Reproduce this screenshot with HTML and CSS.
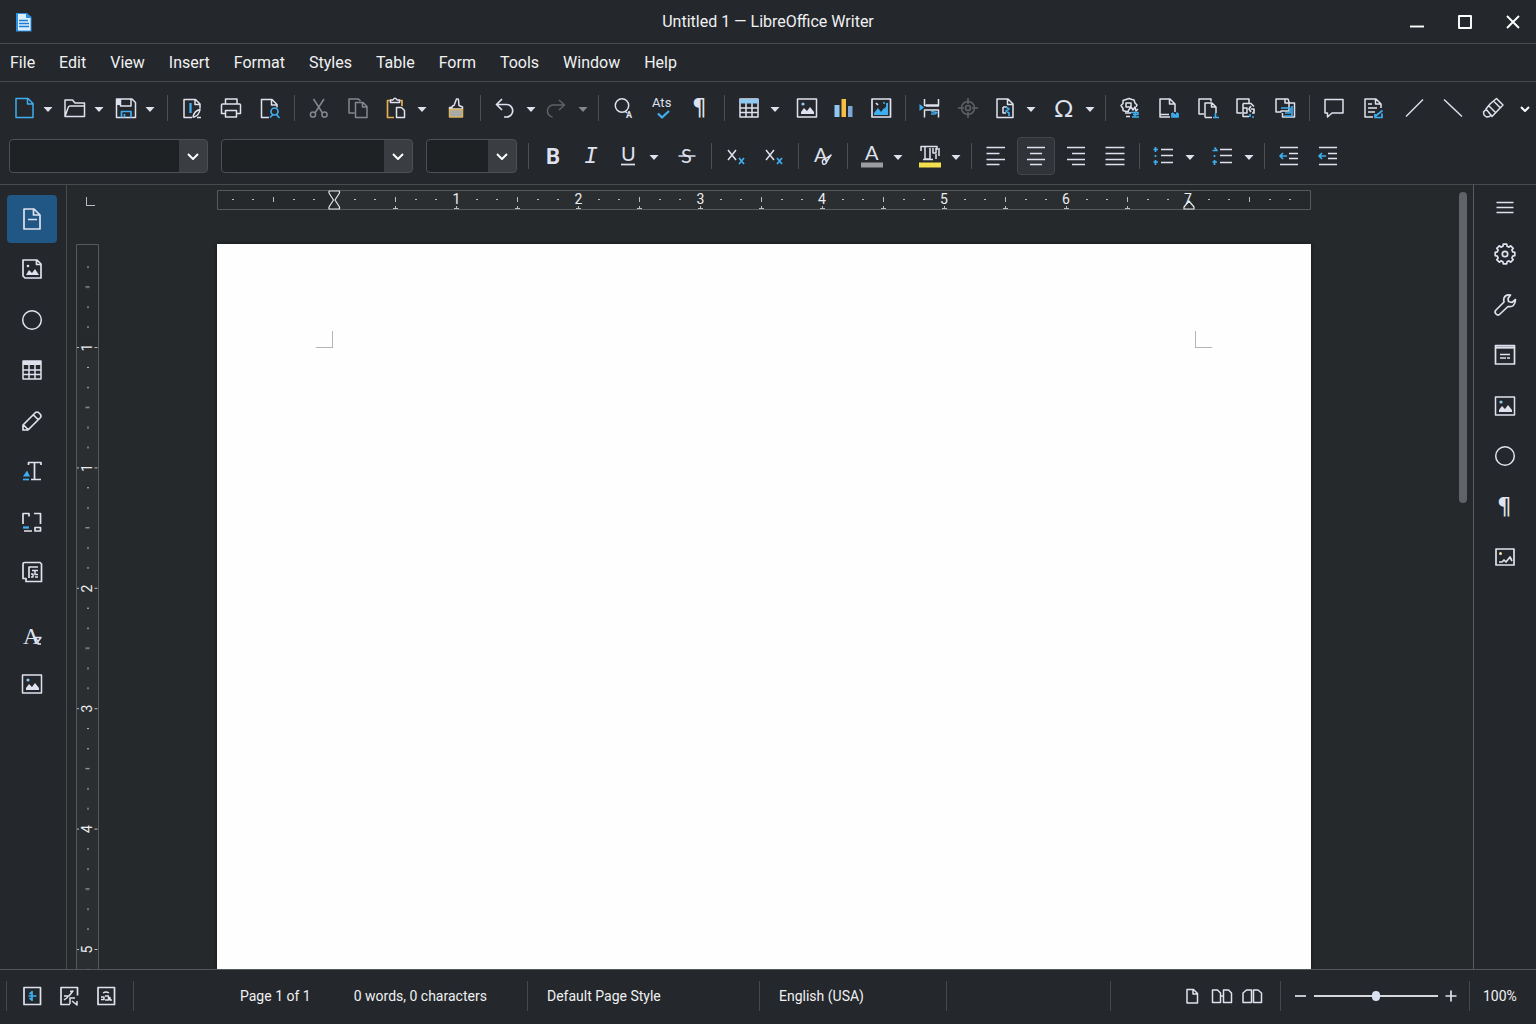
FILE: index.html
```html
<!DOCTYPE html>
<html lang="en">
<head>
<meta charset="utf-8">
<title>Untitled 1 — LibreOffice Writer</title>
<link rel="stylesheet" href="styles.css">
</head>
<body>
<svg class="defs" aria-hidden="true">
  <symbol id="drop" viewBox="0 0 14 24"><path class="fill" d="M2.500 11h9l-4.500 5z"/></symbol>
  <symbol id="chev" viewBox="0 0 28 24"><path class="win" d="M9 10l5 5 5-5"/></symbol>
  <symbol id="pic" viewBox="0 0 24 24"><path d="M2.500 3h19v18h-19z"/><path class="fill" d="M6 18v-2l3-4 3 3 3-4 4 5v2z"/><circle class="pale-blue" cx="8" cy="8" r="1.600"/></symbol>
  <symbol id="ring" viewBox="0 0 24 24"><circle cx="12" cy="12" r="9.300"/></symbol>
  <symbol id="grid" viewBox="0 0 24 24"><path d="M3 3h18v18H3zM9 7v14M15 7v14M3 12h18M3 16.500h18"/></symbol>
</svg>

<header class="titlebar">
  <svg class="icon app-icon" viewBox="0 0 24 24"><path fill="#2d8fe0" stroke="none" d="M5 3h11l4.500 4v14.500H5z"/><path fill="#d9efff" stroke="none" d="M7 4h8v4h4.500v12.500H7z"/><path stroke="#1d7bd0" d="M8 10.500h9M8 13.500h10M8 16.500h10"/></svg>
  <h1>Untitled 1 — LibreOffice Writer</h1>
  <div class="window-buttons">
    <button aria-label="Minimize"><svg class="icon" viewBox="0 0 24 24"><path class="win" d="M5 16.500h14"/></svg></button>
    <button aria-label="Maximize"><svg class="icon" viewBox="0 0 24 24"><path class="win" d="M6 6h12v12H6z"/></svg></button>
    <button aria-label="Close"><svg class="icon" viewBox="0 0 24 24"><path class="win" d="M6 6l12 12M18 6L6 18"/></svg></button>
  </div>
</header>

<nav class="menubar" aria-label="Menu">
  <button>File</button><button>Edit</button><button>View</button><button>Insert</button><button>Format</button><button>Styles</button><button>Table</button><button>Form</button><button>Tools</button><button>Window</button><button>Help</button>
</nav>

<section class="toolbars" aria-label="Toolbars">
  <div class="row standard">
    <div class="group file">
      <span class="split"><button aria-label="New"><svg class="icon blue" viewBox="0 0 24 24"><path d="M4 2.500h12l5 5v14H4zM15.500 3v5H21"/></svg></button><button class="drop" aria-label="New options"><svg><use href="#drop"/></svg></button></span>
      <span class="split"><button aria-label="Open"><svg class="icon" viewBox="0 0 24 24"><path d="M2 20.500V4h7.500l2.500 3h9.500v13.500zM2 20.500l3-8.500q.4-2 2-2h14"/></svg></button><button class="drop" aria-label="Open options"><svg><use href="#drop"/></svg></button></span>
      <span class="split"><button aria-label="Save"><svg class="icon" viewBox="0 0 24 24"><path d="M2.500 3h15.500l3.500 3.500V21.500h-19zM6.500 3v7H17V3"/><path class="fill" d="M3 3h4v6H3z"/><path class="blue bold" d="M7.500 21.500v-6H17v6M10.500 18v3.500"/></svg></button><button class="drop" aria-label="Save options"><svg><use href="#drop"/></svg></button></span>
    </div>
    <div class="group">
      <button aria-label="Export PDF"><svg class="icon" viewBox="0 0 24 24"><path d="M12 21.500H4v-18h11.500l4.500 4.500v4.500M15 4v4.500h5M13 21q1-6 7-7.500-1 6-6 7.500zM17 21.500h4"/><path class="blue thick" d="M10.500 7v10"/></svg></button>
      <button aria-label="Print"><svg class="icon" viewBox="0 0 24 24"><path d="M6.500 8V3h11.500v5M6 17.500H2.500V9q0-1 1-1h17q1 0 1 1v8.500H18M6.500 14.500h11v6.500h-11z"/></svg></button>
      <button aria-label="Print Preview"><svg class="icon" viewBox="0 0 24 24"><path d="M11 21.500H3.500v-18H14l5 5v3M13.500 4v5H19"/><path class="blue bold" d="M12 21.500l3.500-3.500M18 18l3.500 4"/><circle class="blue bold" cx="16.500" cy="15.500" r="3.500"/></svg></button>
    </div>
    <div class="group">
      <button aria-label="Cut"><svg class="icon dim" viewBox="0 0 24 24"><path d="M6.500 3l9 14M17 3L8 17"/><circle cx="6" cy="18.500" r="2.600"/><circle cx="17.500" cy="18.500" r="2.600"/></svg></button>
      <button aria-label="Copy"><svg class="icon dim" viewBox="0 0 24 24"><path d="M8.500 17H3V3h9.500l2 2M9.500 6.500h7.500l4 4v11H9.500zM16.500 7v4H21"/></svg></button>
      <span class="split"><button aria-label="Paste"><svg class="icon" viewBox="0 0 24 24"><path class="gold bold" d="M7 4.500H3.500v17H10M18 10V4.500h-3"/><path d="M6.500 6V4H9q2-3.500 4 0h2.500v2.500h-9zM12.500 11.500h5l3 3v7h-8z"/></svg></button><button class="drop" aria-label="Paste options"><svg><use href="#drop"/></svg></button></span>
      <button aria-label="Clone Formatting"><svg class="icon" viewBox="0 0 24 24"><path d="M8 11.500q0-2 2-2L12.500 3q2-.5 2 1l.5 5.500 3.500 1.500v2h-13v-1.500z"/><path fill="#aaa9aa" stroke="#d8b45c" d="M5.500 13.500h13v7.500h-13z"/></svg></button>
    </div>
    <div class="group end-drop">
      <span class="split"><button aria-label="Undo"><svg class="icon" viewBox="0 0 24 24"><path class="bold" d="M9 3L3.500 8.500 9 14M4 8.500h9.500a6 6 0 010 12.500H11"/></svg></button><button class="drop" aria-label="Undo list"><svg><use href="#drop"/></svg></button></span>
      <span class="split"><button aria-label="Redo"><svg class="icon faint" viewBox="0 0 24 24"><path d="M14 4l5.500 5-5.500 5M19 9h-9.500a6 6 0 00-2 12"/></svg></button><button class="drop faint" aria-label="Redo list"><svg viewBox="0 0 14 24"><path fill="#85878c" stroke="none" d="M2.500 11h9l-4.500 5z"/></svg></button></span>
    </div>
    <div class="group">
      <button aria-label="Find and Replace"><svg class="icon" viewBox="0 0 24 24"><circle cx="11" cy="9.500" r="6.700"/><path d="M14.500 15.500l1.500 1.500"/><text class="solid" x="15" y="22" font-size="9">A</text></svg></button>
      <button aria-label="Spelling"><svg class="icon" viewBox="0 0 24 24"><text x="2" y="11" font-size="13">Ats</text><path class="blue thick" d="M8 17.500l4 4 7-6.500"/></svg></button>
      <button aria-label="Formatting Marks"><svg class="icon" viewBox="0 0 24 24"><text class="para" x="4" y="19">¶</text></svg></button>
    </div>
    <div class="group">
      <span class="split"><button aria-label="Insert Table"><svg class="icon" viewBox="0 0 24 24"><use href="#grid"/><path class="pale-blue" d="M2.500 3h19v4.500h-19z"/></svg></button><button class="drop" aria-label="Table options"><svg><use href="#drop"/></svg></button></span>
      <button aria-label="Insert Image"><svg class="icon"><use href="#pic"/></svg></button>
      <button aria-label="Insert Chart"><svg class="icon" viewBox="0 0 24 24"><path class="pale-blue" d="M2.500 9h5v12h-5z"/><path fill="#f5bf42" stroke="none" d="M9.500 3h4.500v18H9.500z"/><path fill="#7ba7d9" stroke="none" d="M16 10h4.500v11H16z"/></svg></button>
      <button aria-label="Insert Text Box"><svg class="icon" viewBox="0 0 24 24"><path class="bold" d="M3 3h18.500v18H3z"/><path class="blue-fill" d="M5 19v-2l4-5 3 4 3-4 2 1V7h2v12z"/><path class="bold" d="M7 7l2 2"/><path class="blue bold" d="M14 7h2M16 12h3"/></svg></button>
    </div>
    <div class="group end-drop">
      <button aria-label="Page Break"><svg class="icon" viewBox="0 0 24 24"><path d="M6.500 3v6.500h14V3M6.500 21.500V14h14v7.500"/><path class="thick" d="M8 9.500h13"/><path class="blue-fill" d="M1.500 8l4.500 3.500L1.500 15z"/><path class="blue" d="M13 15.500l6 1-2 1.500h-4"/></svg></button>
      <button aria-label="Field"><svg class="icon faint" viewBox="0 0 24 24"><circle cx="12" cy="12" r="6.500"/><circle class="bold" cx="12" cy="12" r="2.500"/><path d="M12 2v6M12 16v6M2 12h6M16 12h6"/></svg></button>
      <span class="split"><button aria-label="Insert Field"><svg class="icon" viewBox="0 0 24 24"><path d="M4 3h11l5 5v13.500H4zM14.500 3.500v5H20"/><path d="M10 11v6h3M10 11h4"/><path class="blue bold" d="M13 11l3 2-3 2 3 2v3"/></svg></button><button class="drop" aria-label="Field options"><svg><use href="#drop"/></svg></button></span>
      <span class="split"><button aria-label="Special Character"><svg class="icon" viewBox="0 0 24 24"><text class="light" x="2" y="21" font-size="24">Ω</text></svg></button><button class="drop" aria-label="Character options"><svg><use href="#drop"/></svg></button></span>
    </div>
    <div class="group">
      <button aria-label="Hyperlink"><svg class="icon" viewBox="0 0 24 24"><path d="M8 3.500l3-1 3 1 2 .5 1 3 2 2-1 2M8 3.500l-3 1v3l-2 2 2 3v2l3 1h3"/><path d="M8 7h5v4H8zM10 15l3-4 2 3 2-3 1 4 2-2"/><path d="M7 17h6M8 20.500h4"/><path class="blue" d="M13 16.500h7v2h-5M14 21h7M17 16v5"/></svg></button>
      <button aria-label="Footnote"><svg class="icon" viewBox="0 0 24 24"><path d="M13 21H3V3h10l5 5v8M12.500 3.500V8H18"/><path d="M3 18.500h9"/><path class="blue bold" d="M15 17l5 3.500v-4M16 20h4M15 17v4h6v-4"/></svg></button>
      <button aria-label="Endnote"><svg class="icon" viewBox="0 0 24 24"><path d="M8 18H3V3h12v2.500M9 21.500V7h7l4 4v6M9 21.500h7M15.500 7v4H20"/><path class="blue bold" d="M19.500 17v4M17 21.500h6"/></svg></button>
      <button aria-label="Bookmark"><svg class="icon" viewBox="0 0 24 24"><path d="M8 17H3V3h12v4M9 7.500h8l3 3M9 7.500v13h6M15 4v3M9 12h4v5H9"/><path class="bold" d="M17 10l-2 3 2 3M17 13h3v4h-2"/><path class="blue bold" d="M16 18v3M18 21h2"/></svg></button>
      <button aria-label="Cross-reference"><svg class="icon" viewBox="0 0 24 24"><path d="M8 16H3V3h12l1 3v9H8zM12 3v4h4"/><path d="M16 7h5.500v14h-12v-4"/><path class="blue bold" d="M8 12h9v5h-5M11 20h8V10"/></svg></button>
    </div>
    <div class="group last">
      <button aria-label="Comment"><svg class="icon" viewBox="0 0 24 24"><path d="M3 3.500h18V17H10l-4.500 4V17H3z"/></svg></button>
      <button aria-label="Track Changes"><svg class="icon" viewBox="0 0 24 24"><path d="M11 21H3V3h11l5 5v4M13.500 3.500V8H19M6 8h4M6 12h9M6 16h7"/><path class="blue bold" d="M13 20.500l7.500-6M13 18v3.500h7v-4"/></svg></button>
      <button aria-label="Line"><svg class="icon" viewBox="0 0 24 24"><path d="M4 20.500L21 3.500"/></svg></button>
      <button aria-label="Arrow Line"><svg class="icon" viewBox="0 0 24 24"><path d="M3 3.500l18 17"/></svg></button>
      <span class="split wide"><button aria-label="Draw Functions"><svg class="icon" viewBox="0 0 24 24"><path d="M9 8l6.500-5.500L22 9l-11 11.500L5 13zM12.500 5l7 7M8 10l6.500 6.500M5.500 13L2.500 16l.5 3 2.500 2 3-.5 2-2"/></svg></button><button class="drop" aria-label="More controls"><svg viewBox="7 0 14 24"><path class="win" d="M10 11l4 4 4-4"/></svg></button></span>
    </div>
  </div>

  <div class="row formatting">
    <div class="combos">
      <span class="combo style"><select aria-label="Paragraph Style"><option></option></select><svg><use href="#chev"/></svg></span>
      <span class="combo font"><select aria-label="Font Name"><option></option></select><svg><use href="#chev"/></svg></span>
      <span class="combo size"><select aria-label="Font Size"><option></option></select><svg><use href="#chev"/></svg></span>
    </div>
    <div class="group">
      <button aria-label="Bold"><svg class="icon" viewBox="0 0 24 24"><text class="strong" x="5" y="20" font-size="22">B</text></svg></button>
      <button aria-label="Italic"><svg class="icon" viewBox="0 0 24 24"><text class="slab" x="6" y="19" font-size="23">I</text></svg></button>
      <span class="split u"><button aria-label="Underline"><svg class="icon" viewBox="0 0 24 24"><text class="light" x="5" y="17" font-size="20">U</text><path class="bold" d="M5 20.500h14"/></svg></button><button class="drop" aria-label="Underline options"><svg><use href="#drop"/></svg></button></span>
      <button aria-label="Strikethrough"><svg class="icon" viewBox="0 0 24 24"><text class="light" x="6" y="19" font-size="20">S</text><path d="M3.500 12h17"/></svg></button>
    </div>
    <div class="group">
      <button aria-label="Superscript"><svg class="icon" viewBox="0 0 24 24"><path d="M4 6l8 10M12 6L4 16"/><path class="blue bold" d="M15 14l5 6M20 14l-5 6"/></svg></button>
      <button aria-label="Subscript"><svg class="icon" viewBox="0 0 24 24"><path d="M4 6l8 10M12 6L4 16"/><path class="blue bold" d="M15 14l5 6M20 14l-5 6"/></svg></button>
    </div>
    <div class="group">
      <button aria-label="Clear Formatting"><svg class="icon" viewBox="0 0 24 24"><text class="light" x="3" y="18" font-size="20">A</text><path d="M12 20q-2-4 2-5l6-4-4 6q-1 4-4 3z"/></svg></button>
    </div>
    <div class="group end-drop">
      <span class="split"><button aria-label="Font Color"><svg class="icon" viewBox="0 0 24 24"><text class="light" x="5" y="16" font-size="20">A</text><path fill="#9c9da0" stroke="none" d="M1 18.500h22v5H1z"/></svg></button><button class="drop" aria-label="Font color options"><svg><use href="#drop"/></svg></button></span>
      <span class="split"><button aria-label="Highlighting"><svg class="icon" viewBox="0 0 24 24"><path d="M3 7V2.500h16V6M7 3v12h5V4M5 15.500h10M15 4v5h3V4M18 10v5M21 4v8"/><path fill="#f4e04d" stroke="none" d="M1 18.500h22v5H1z"/></svg></button><button class="drop" aria-label="Highlighting options"><svg><use href="#drop"/></svg></button></span>
    </div>
    <div class="group">
      <button aria-label="Align Left"><svg class="icon" viewBox="0 0 24 24"><path d="M2.500 3.500h18.500M2.500 9.500h13M2.500 15.500h18.500M2.500 20.500h13"/></svg></button>
      <button class="pressed" aria-label="Center"><svg class="icon" viewBox="0 0 24 24"><path d="M3 3.500h18M6 9.500h12M3 15.500h18M6 20.500h12"/></svg></button>
      <button aria-label="Align Right"><svg class="icon" viewBox="0 0 24 24"><path d="M3 3.500h18M8 9.500h13M3 15.500h18M8 20.500h13"/></svg></button>
      <button aria-label="Justify"><svg class="icon" viewBox="0 0 24 24"><path d="M2.500 3.500h19M2.500 9.500h19M2.500 15.500h19M2.500 20.500h19"/></svg></button>
    </div>
    <div class="group end-drop">
      <span class="split"><button aria-label="Bullets"><svg class="icon" viewBox="0 0 24 24"><path d="M9 5.500h12M9 11.500h12M9 18.500h12"/><path class="blue bold" d="M3.500 3v5M1.500 5.500h4.500M3.500 11v2M3.500 16v5M1.500 18h4.500"/></svg></button><button class="drop" aria-label="Bullet options"><svg><use href="#drop"/></svg></button></span>
      <span class="split"><button aria-label="Numbering"><svg class="icon" viewBox="0 0 24 24"><path d="M9 5.500h12M9 11.500h12M9 18.500h12"/><path class="blue bold" d="M1.500 6.500h4.500L3.500 3.500M3.500 11v2M3.500 16v5M1.500 18h4.500"/></svg></button><button class="drop" aria-label="Numbering options"><svg><use href="#drop"/></svg></button></span>
    </div>
    <div class="group start">
      <button aria-label="Increase Indent"><svg class="icon" viewBox="0 0 24 24"><path d="M3 3.500h18M12 9.500h9M12 14.500h9M3 20.500h18"/><path class="blue bold" d="M3 12h7M6 9l-3 3 3 3"/></svg></button>
      <button aria-label="Decrease Indent"><svg class="icon" viewBox="0 0 24 24"><path d="M3 3.500h18M12 9.500h9M12 14.500h9M3 20.500h18"/><path class="blue bold" d="M3 12h7M6 9l-3 3 3 3"/></svg></button>
    </div>
  </div>
</section>

<main class="workspace">
  <nav class="side left" aria-label="Insert">
    <div class="side-group main-group">
      <button class="active" aria-label="Page"><svg class="icon" viewBox="0 0 24 24"><path class="bold" d="M4 2h10l6 6v14H4zM13.500 2.500V8H20"/><path d="M8 12.500h9"/></svg></button>
      <button aria-label="Image"><svg class="icon" viewBox="0 0 24 24"><path class="bold" d="M3 3h14l4 4v14H5l-2-2zM16.500 3.500v4H21"/><path class="fill" d="M6 18l3-5 3 3 3-4 4 6z"/><circle class="fill" cx="8" cy="9" r="1.300"/></svg></button>
      <button aria-label="Shape"><svg class="icon"><use href="#ring"/></svg></button>
      <button aria-label="Table"><svg class="icon" viewBox="0 0 24 24"><use href="#grid"/><path class="fill" d="M3 3h18v4H3z"/></svg></button>
      <button aria-label="Draw"><svg class="icon" viewBox="0 0 24 24"><path class="bold" d="M3 21v-5L15.500 3.500q1.500-1 3 0l2 2q1 1.500 0 3L8 21zM13.500 6l5 5M3.500 16l4.500 4.500"/></svg></button>
      <button aria-label="Text"><svg class="icon" viewBox="0 0 24 24"><path class="bold" d="M8.500 6V3.500H21V6M14.500 4v16M11 20.500h10"/><path class="blue-fill" d="M3 17.500l4-6 3 6z"/><path class="blue bold" d="M3 20.500h6"/></svg></button>
      <button aria-label="Frame"><svg class="icon" viewBox="0 0 24 24"><path class="bold" d="M3 14V3.500h6v3M14 3.500h6.500V14M4 21h8M15 17.500h5.500v3.500H15z"/><path class="blue thick" d="M3 17.500h6"/></svg></button>
      <button aria-label="Section"><svg class="icon" viewBox="0 0 24 24"><path class="bold" d="M6 18.500H3V4q0-1.500 1.500-1.500H20l1.500 1.500v17.500H6zM9 18V7h9"/><path d="M12 10.500h6M15 10.500v4h3M11 14h2v3h-2M15 17h3"/></svg></button>
    </div>
    <div class="side-group">
      <button aria-label="Character"><svg class="icon" viewBox="0 0 24 24"><text class="serif" x="3" y="20" font-size="23">A</text><path d="M15 13.500h6l-3 4-3-4M18 17v3h3"/></svg></button>
      <button aria-label="Gallery"><svg class="icon"><use href="#pic"/></svg></button>
    </div>
  </nav>

  <section class="editor">
    <div class="tab-corner"><span></span></div>
    <div class="hruler">
      <svg viewBox="0 0 1094 20" role="img" aria-label="Horizontal ruler">
        <defs>
          <pattern id="hd" patternUnits="userSpaceOnUse" x="117" y="0" width="122" height="20"><path class="dots" d="M20 9.500h2M40 9.500h2M81 9.500h2M101 9.500h2M61.500 7v5"/></pattern>
          <pattern id="hm" patternUnits="userSpaceOnUse" x="147" y="0" width="61" height="20"><path class="dots" d="M31.500 19v-3M29 18.500h5"/></pattern>
        </defs>
        <rect class="lit" x="117" y="0" width="855" height="20"/>
        <rect x="10" width="1074" height="20" fill="url(#hd)"/>
        <rect x="130" width="830" height="20" fill="url(#hm)"/>
        <rect class="box" x=".5" y=".5" width="1093" height="19"/>
        <path class="marker" d="M112 1h10.500v2l-4.500 7 4.500 7v2H112v-2l4.500-7-4.500-7zM972 11l-5 6v2h10v-2z"/>
        <g class="nums"><text x="239.500" y="14">1</text><text x="361.500" y="14">2</text><text x="483.500" y="14">3</text><text x="605" y="14">4</text><text x="727" y="14">5</text><text x="849" y="14">6</text><text x="971" y="14">7</text></g>
      </svg>
    </div>
    <div class="vruler">
      <svg role="img" aria-label="Vertical ruler">
        <defs><pattern id="vd" patternUnits="userSpaceOnUse" x="0" y="103" width="23" height="120.400"><path class="dots" d="M11 20.500h2M11 40.500h2M9.500 60.500h4M11 80.500h2M11 100.500h2M1 .5h2M18.500 .5h3"/></pattern></defs>
        <rect class="lit" x="0" y="103" width="23" height="100%"/>
        <rect y="16" width="23" height="100%" fill="url(#vd)"/>
        <path class="box" d="M.5 2000V.5h22V2000"/>
        <g class="nums"><text transform="translate(16 103.500)rotate(-90)">1</text><text transform="translate(16 224)rotate(-90)">1</text><text transform="translate(16 344.500)rotate(-90)">2</text><text transform="translate(16 464.500)rotate(-90)">3</text><text transform="translate(16 585)rotate(-90)">4</text><text transform="translate(16 705.500)rotate(-90)">5</text></g>
      </svg>
    </div>
    <div class="canvas"><article class="page" contenteditable="true" aria-label="Document"><i class="mark l"></i><i class="mark r"></i></article></div>
    <div class="scroll"><div class="thumb"></div></div>
  </section>

  <nav class="side right" aria-label="Sidebar">
    <button aria-label="Sidebar Settings"><svg class="icon" viewBox="0 0 24 24"><path class="bold" d="M3.500 7.500h17M3.500 12.500h17M3.500 17.500h17"/></svg></button>
    <div class="side-group main-group">
      <button aria-label="Properties"><svg class="icon" viewBox="0 0 24 24"><path class="bold" d="M13.700 2.200L14.100 4.300 16 5.100 17.700 3.800 20.200 6.300 18.900 8 19.700 9.900 21.800 10.300V13.700L19.700 14.100 18.900 16 20.200 17.700 17.700 20.200 16 18.900 14.100 19.700 13.700 21.800H10.300L9.900 19.700 8 18.900 6.300 20.200 3.800 17.700 5.100 16 4.300 14.100 2.200 13.700V10.300L4.300 9.900 5.100 8 3.800 6.300 6.300 3.800 8 5.100 9.900 4.300 10.300 2.200z"/><circle class="bold" cx="12" cy="12" r="2.700"/></svg></button>
      <button aria-label="Tools"><svg class="icon" viewBox="0 0 24 24"><path class="bold" d="M17.500 2q-5-1-6.500 3-.6 2 0 4l-8 8q-2 2 0 4t4 0l8-7.500q7 1.500 7.500-7l-3.500 3-3.500-1-.500-3z"/></svg></button>
      <button aria-label="Page Deck"><svg class="icon" viewBox="0 0 24 24"><path class="bold" d="M2.500 2.500h19v18.500h-19z"/><path class="thick" d="M3 4.500h18"/><path d="M7 11.500h10M7 15h6M14 15h3"/></svg></button>
      <button aria-label="Gallery Deck"><svg class="icon"><use href="#pic"/></svg></button>
      <button aria-label="Shapes Deck"><svg class="icon"><use href="#ring"/></svg></button>
      <button aria-label="Styles Deck"><svg class="icon" viewBox="0 0 24 24"><text class="para" x="4" y="19">¶</text></svg></button>
      <button aria-label="Navigator"><svg class="icon" viewBox="0 0 24 24"><path class="bold" d="M3 4h18v16H3z"/><path class="bold" d="M6 17h3l2-2 2 2 4-5 2 4"/><circle cx="7.500" cy="8.500" r="1.500" fill="#efe6ad" stroke="none"/></svg></button>
    </div>
  </nav>
</main>

<footer class="status">
  <div class="cell icons">
    <button aria-label="Selection Mode"><svg class="icon" viewBox="0 0 24 24"><path class="bold" d="M4 3.500h16.500v17H4z"/><path class="blue bold" d="M12 7v10M8.500 12h8M9.500 10l2.500-2M9.500 14l2.500 2"/></svg></button>
    <button aria-label="Insert Mode"><svg class="icon" viewBox="0 0 24 24"><path class="bold" d="M13 20.500H4v-17h16.500v8"/><path d="M7 12h5l4-5-3 .5M7 16l4-3M13 20v-6h5M15 17l5 4v-4"/></svg></button>
    <button aria-label="Document Changes"><svg class="icon" viewBox="0 0 24 24"><path class="bold" d="M4 3.500h16.500v17H4z"/><path d="M9 9q3-2 6 0M7 13h3v2.500H7M11 12h3.500v4H11M16 13v3h2"/></svg></button>
  </div>
  <div class="cell words"><span>Page 1 of 1</span><span>0 words, 0 characters</span></div>
  <div class="cell text">Default Page Style</div>
  <div class="cell text">English (USA)</div>
  <div class="cell"></div>
  <div class="cell views">
    <button aria-label="Single Page"><svg class="icon" viewBox="0 0 24 24"><path d="M7 5.500h6.500l4 4v9.500H7zM13 6v4h4.500"/></svg></button>
    <button aria-label="Multiple Pages"><svg class="icon" viewBox="0 0 24 24"><path d="M2.500 6h5l3 3v9.500h-8zM13.500 6h5l3 3v9.500h-8zM10.500 12h3"/></svg></button>
    <button aria-label="Book View"><svg class="icon" viewBox="0 0 24 24"><path d="M11.500 6h-5l-3.500 3v9.500h8.500zM13.500 6h4.500l3.500 3v9.500h-8z"/></svg></button>
  </div>
  <div class="cell zoom">
    <button aria-label="Zoom Out"><svg class="icon" viewBox="0 0 24 24"><path class="bold" d="M6 12h11"/></svg></button>
    <input type="range" min="0" max="200" value="100" aria-label="Zoom">
    <button aria-label="Zoom In"><svg class="icon" viewBox="0 0 24 24"><path class="bold" d="M6.500 12h11M12 6.500v11"/></svg></button>
  </div>
  <div class="cell percent">100%</div>
</footer>
</body>
</html>
```
FILE: styles.css
```css
:root {
  --bg: #24272b;
  --canvas: #25292c;
  --line: #474b4e;
  --ink: #dfe2ee;
  --text: #f0f1f3;
  --blue: #3eaef0;
}

* { box-sizing: border-box; }

body {
  margin: 0;
  min-height: 100vh;
  display: flex;
  flex-direction: column;
  background: var(--bg);
  color: var(--text);
  font: 16px/20px Roboto, "Liberation Sans", sans-serif;
}

button {
  display: flex;
  align-items: center;
  justify-content: center;
  padding: 0;
  border: 0;
  background: none;
  color: inherit;
  font: inherit;
}

.defs { position: absolute; width: 0; height: 0; }

/* icons */
svg {
  display: block;
  fill: none;
  stroke: var(--ink);
  stroke-width: 1.5;
  stroke-linejoin: round;
}
.icon { width: 24px; height: 24px; flex: none; overflow: visible; }
.bold { stroke-width: 1.7; }
.thick { stroke-width: 2.3; }
.fill { fill: var(--ink); stroke: none; }
.blue { stroke: var(--blue); }
.blue-fill { fill: var(--blue); stroke: none; }
.pale-blue { fill: #8fc9f2; stroke: none; }
.gold { stroke: #dfae55; }
.dim { stroke: #85888f; }
.faint { stroke: #5e6165; }
.win { stroke: #fff; stroke-width: 1.9; }
svg text { fill: var(--ink); stroke: none; font-family: Roboto, sans-serif; }
svg .light { font-family: Lato, sans-serif; }
svg .solid, svg .strong { font-weight: 700; }
svg .serif { font-family: "Liberation Serif", serif; }
svg .slab { font-family: "Liberation Mono", monospace; font-style: italic; }
svg .para { font: 23px "DejaVu Sans", sans-serif; }

/* title and menu */
.titlebar {
  display: grid;
  grid-template-columns: 1fr auto 1fr;
  align-items: center;
  height: 44px;
  padding: 0 11px;
  border-bottom: 1px solid var(--line);
}
.titlebar h1 { margin: 0; font-size: 16px; font-weight: 400; }
.window-buttons { display: flex; justify-content: flex-end; gap: 24px; }

.menubar {
  display: flex;
  align-items: center;
  gap: 24px;
  height: 38px;
  padding: 0 10px;
  border-bottom: 1px solid var(--line);
}

/* toolbars */
.toolbars {
  display: flex;
  flex-direction: column;
  gap: 17px;
  padding: 13px 0 10px;
  border-bottom: 1px solid var(--line);
}
.row { display: grid; align-items: center; }
.standard { grid-template-columns: 167fr 127fr 186fr 118fr 126fr 181fr 200fr 204fr 227fr; }
.formatting { grid-template-columns: 528fr 183fr 88fr 48fr 124fr 168fr 125fr 272fr; height: 36px; }
.group {
  display: flex;
  align-items: center;
  justify-content: space-between;
  height: 26px;
  padding: 0 12px;
  border-left: 1px solid #4b4e52;
}
.formatting .group { padding-bottom: 1px; }
.group.end-drop { padding-right: 8px; }
.group.last { padding-right: 4px; }
.group.start { justify-content: flex-start; gap: 15px; }
.group.file { padding-right: 10px; border-left: 0; }
.split { display: flex; align-items: center; gap: 7px; }
.file .split { gap: 5px; }
.split.wide { gap: 13px; }
.drop, .drop svg { width: 14px; height: 24px; }
.pressed {
  width: 38px;
  height: 38px;
  margin: 0 -7px;
  border: 1px solid #44474c;
  border-radius: 4px;
  background: #303338;
}

.combos { display: flex; gap: 13px; padding: 0 11px 0 9px; }
.combo {
  display: grid;
  grid-template-columns: 1fr 28px;
  align-items: center;
  height: 34px;
  border: 1px solid #4c5054;
  border-radius: 4px;
  background: linear-gradient(to left, #3a3d41 28px, #1f2225 28px);
}
.combo.style { flex: 200; }
.combo.font { flex: 192; }
.combo.size { flex: 90; }
.combo select {
  grid-area: 1 / 1 / 2 / 3;
  width: 100%;
  height: 32px;
  appearance: none;
  border: 0;
  background: none;
  color: inherit;
  font: inherit;
}
.combo svg { grid-area: 1 / 2; width: 28px; height: 24px; pointer-events: none; }

/* workspace */
.workspace { flex: 1; display: flex; background: var(--canvas); }
.side { background: var(--bg); }
.side.left { width: 67px; padding: 10px 9px 0 7px; border-right: 1px solid var(--line); }
.side.right { width: 63px; border-left: 1px solid #5a5d61; }
.side-group { display: flex; flex-direction: column; justify-content: space-between; }
.side.left button { width: 50px; height: 48px; }
.side.right button { width: 62px; height: 44px; }
.side.left .main-group { height: 401px; margin-bottom: 16px; }
.side.right .main-group { height: 347px; margin-top: 3px; }
.side .active { border-radius: 4px; background: #205784; }

.editor {
  flex: 1;
  display: grid;
  grid-template-columns: 33px minmax(0, 1fr) 45px;
  grid-template-rows: 59px 1fr;
}
.tab-corner { padding: 12px 0 0 19px; }
.tab-corner span { display: block; width: 9px; height: 9px; border: solid #b8bbc2; border-width: 0 0 1px 1px; }
.hruler { grid-column: 2; padding-top: 5px; }
.hruler svg { width: 100%; max-width: 1094px; margin: 0 auto; }
.vruler { grid-row: 2; grid-column: 1; padding-left: 9px; }
.vruler svg { width: 23px; height: 100%; min-height: 100px; }
.lit { fill: #2b2e31; stroke: none; }
.box { stroke: #56595d; stroke-width: 1; }
.dots { stroke: #b9bcc0; stroke-width: 1; }
.marker { stroke: #e4e6ea; stroke-width: 1.2; }
.nums text { fill: #eceef1; font-size: 14px; text-anchor: middle; }
.vruler svg, .hruler svg { stroke: none; }
.canvas { grid-row: 2; grid-column: 2; display: flex; justify-content: center; }
.page {
  display: flex;
  justify-content: space-between;
  width: 100%;
  max-width: 1094px;
  padding: 87px 99px 0;
  background: #fefefe;
  box-shadow: 0 0 4px #14171a;
  clip-path: inset(-4px -4px 0 -4px);
  outline: 0;
}
.mark { width: 17px; height: 17px; border: 0 solid #b5b5b5; border-bottom-width: 1px; }
.mark.l { border-right-width: 1px; }
.mark.r { border-left-width: 1px; }
.scroll { grid-row: 1 / 3; grid-column: 3; padding: 7px 6px 0 0; }
.thumb { width: 8px; height: 311px; margin-left: auto; border-radius: 4px; background: #606367; }

/* status bar */
.status {
  display: grid;
  grid-template-columns: 127fr 394fr 232fr 187fr 164fr 170fr 189fr 67fr;
  align-items: center;
  height: 55px;
  padding: 0 0 2px 6px;
  border-top: 1px solid #55585b;
  font-size: 14px;
}
.cell { display: flex; align-items: center; height: 30px; border-left: 1px solid #45484c; }
.icons { gap: 13px; padding-left: 13px; }
.words { gap: 43px; padding-left: 106px; }
.text { padding-left: 19px; }
.views { justify-content: flex-end; gap: 6px; padding-right: 16px; }
.zoom { padding: 0 6px 0 8px; }
.zoom input {
  flex: 1;
  width: 0;
  min-width: 0;
  height: 20px;
  margin: 0 1px;
  appearance: none;
  background: linear-gradient(#d5d7dc, #d5d7dc) center / 100% 2px no-repeat;
}
.zoom input::-webkit-slider-thumb {
  appearance: none;
  width: 8px;
  height: 10px;
  border-radius: 4px;
  background: #dbe0f0;
}
.percent { padding-left: 13px; }
```
